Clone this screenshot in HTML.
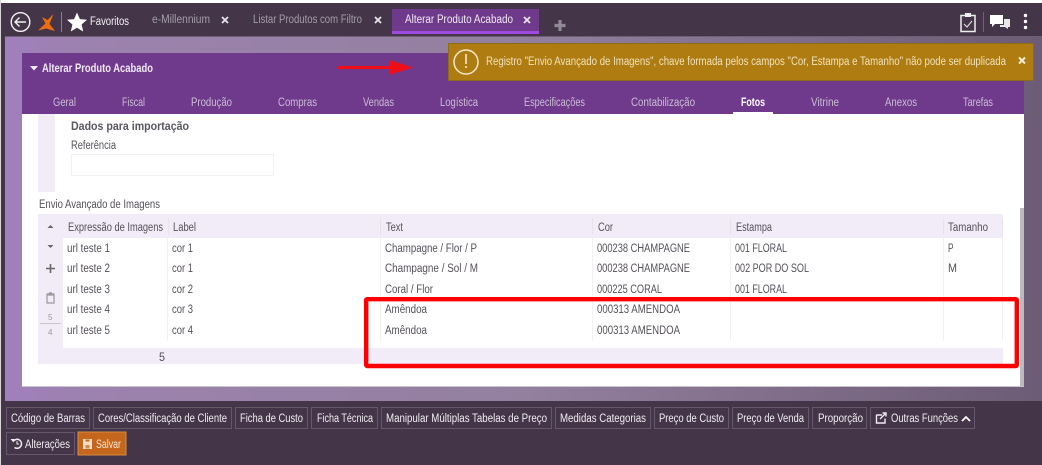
<!DOCTYPE html>
<html lang="pt"><head><meta charset="utf-8"><title>Alterar Produto Acabado</title>
<style>
html,body{margin:0;padding:0;width:1042px;height:465px;overflow:hidden;background:#443648}
svg{display:block;position:absolute;left:0;top:0}
text{font-family:"Liberation Sans",sans-serif;font-size:11.5px}
.r text{fill:#55505a}
.b text{fill:#f0ecf2}
.t text{fill:#c9bdd3}
</style></head><body>
<svg width="1042" height="465" viewBox="0 0 1042 465" xmlns="http://www.w3.org/2000/svg">
<defs>
<linearGradient id="bg" x1="0" y1="0" x2="1" y2="0"><stop offset="0" stop-color="#a17fbc"/><stop offset=".08" stop-color="#9c82ae"/><stop offset=".5" stop-color="#93809f"/><stop offset="1" stop-color="#6d5c75"/></linearGradient>
<filter id="s" x="-2%" y="-2%" width="104%" height="104%"><feGaussianBlur stdDeviation="0.35"/></filter>
</defs>
<rect width="1042" height="465" fill="#443648"/>
<rect width="1042" height="3" fill="#fff"/>
<rect x="0" width="1" height="465" fill="#d8d4da"/>
<rect x="5" y="36" width="1037" height="365" fill="url(#bg)"/>
<rect x="5" y="36" width="1037" height="1" fill="#6e5f74"/>

<!-- panel -->
<rect x="22" y="53" width="1002" height="61" fill="#6f3a8c"/>
<rect x="22" y="114" width="1002" height="272" fill="#fff"/>
<rect x="22" y="386" width="1002" height="1" fill="#c9c5cc"/>
<rect x="1020" y="208" width="4" height="178" fill="#bdbabf"/>

<!-- active tab -->
<rect x="392" y="9" width="147" height="25" fill="#6f3a8c"/>
<rect x="392" y="31" width="147" height="3" fill="#a04ae0"/>

<!-- content blocks -->
<rect x="38" y="114" width="17" height="78" fill="#f1ecf7"/>
<rect x="71.5" y="154.5" width="202" height="21" fill="#fff" stroke="#f2f2f2"/>
<rect x="38" y="214" width="965" height="24" fill="#f1ecf7"/>
<rect x="38" y="214" width="25" height="150" fill="#f1ecf7"/>
<rect x="38" y="348" width="965" height="16" fill="#f1ecf7"/>
<g fill="#e6e3e9">
<rect x="168" y="218" width="1" height="17"/><rect x="380" y="218" width="1" height="17"/><rect x="592" y="218" width="1" height="17"/><rect x="730" y="218" width="1" height="17"/><rect x="943" y="218" width="1" height="17"/><rect x="1002" y="218" width="1" height="17"/>
</g>
<g fill="#f1f0f2">
<rect x="167" y="238" width="1" height="103"/><rect x="380" y="238" width="1" height="103"/><rect x="592" y="238" width="1" height="103"/><rect x="730" y="238" width="1" height="103"/><rect x="943" y="238" width="1" height="103"/><rect x="1002" y="238" width="1" height="103"/>
</g>

<!-- alert -->
<rect x="448.5" y="43.5" width="585" height="37" fill="#ae7c10" stroke="#8f6a18"/>

<g filter="url(#s)">
<!-- top bar icons -->
<circle cx="20.5" cy="22" r="9.3" fill="none" stroke="#f2f0f3" stroke-width="1.4"/>
<path d="M26 22H15M19.5 17.5L15 22l4.500 4.500" fill="none" stroke="#f2f0f3" stroke-width="1.4"/>
<path d="M53.500 14L47.500 20 42 17 45.500 23.500 38 30.500 46 28.500 55 31 49.500 24z" fill="#f06c10"/>
<rect x="61" y="12" width="1" height="20" fill="#8a7f8e"/>
<path d="M77 12.500l2.900 6.600 7.100.7-5.400 4.700 1.600 7-6.200-3.700-6.200 3.700 1.600-7-5.400-4.700 7.100-.7z" fill="#fff"/>
<g stroke="#e8e4ea" stroke-width="1.800" fill="none">
<path d="M222 17l6 6M228 17l-6 6"/><path d="M375 17l6 6M381 17l-6 6"/><path d="M524 17l6 6M530 17l-6 6"/>
</g>
<path d="M560 20v11M554.500 25.500h11" stroke="#8f8995" stroke-width="3.200"/>
<!-- right icons -->
<rect x="961" y="15.500" width="14" height="16" fill="none" stroke="#eee" stroke-width="1.500"/>
<rect x="965" y="13" width="6" height="4" fill="#eee"/>
<path d="M964 24l3 3 5-6" fill="none" stroke="#ddd" stroke-width="1.100"/>
<rect x="983" y="12" width="1" height="20" fill="#6f6473"/>
<path d="M990 15h13v9h-8l-3 3v-3h-2z" fill="#fff"/>
<path d="M1004 19h6v8h-2v2l-3-2h-5v-2h4z" fill="#e8e8e8"/>
<g fill="#fff"><circle cx="1025.500" cy="15.500" r="1.700"/><circle cx="1025.500" cy="21.500" r="1.700"/><circle cx="1025.500" cy="27.500" r="1.700"/></g>

<!-- top bar text -->
<text x="90" y="25" fill="#f4f2f5" textLength="39" lengthAdjust="spacingAndGlyphs">Favoritos</text>
<text x="152" y="23" fill="#a39ca8" textLength="58" lengthAdjust="spacingAndGlyphs">e-Millennium</text>
<text x="253" y="23" fill="#a39ca8" textLength="109" lengthAdjust="spacingAndGlyphs">Listar Produtos com Filtro</text>
<text x="405" y="23" fill="#efe9f3" textLength="108" lengthAdjust="spacingAndGlyphs">Alterar Produto Acabado</text>

<!-- panel header -->
<path d="M30 66h8l-4 4.500z" fill="#f4f0f6"/>
<text x="42" y="72" fill="#efe8f3" font-weight="bold" textLength="111" lengthAdjust="spacingAndGlyphs">Alterar Produto Acabado</text>
<g class="t">
<text x="53" y="106" textLength="23" lengthAdjust="spacingAndGlyphs">Geral</text>
<text x="122" y="106" textLength="23" lengthAdjust="spacingAndGlyphs">Fiscal</text>
<text x="191" y="106" textLength="41" lengthAdjust="spacingAndGlyphs">Produção</text>
<text x="278" y="106" textLength="39" lengthAdjust="spacingAndGlyphs">Compras</text>
<text x="363" y="106" textLength="31" lengthAdjust="spacingAndGlyphs">Vendas</text>
<text x="440" y="106" textLength="38" lengthAdjust="spacingAndGlyphs">Logística</text>
<text x="524" y="106" textLength="61" lengthAdjust="spacingAndGlyphs">Especificações</text>
<text x="631" y="106" textLength="64" lengthAdjust="spacingAndGlyphs">Contabilização</text>
<text x="811" y="106" textLength="28" lengthAdjust="spacingAndGlyphs">Vitrine</text>
<text x="885" y="106" textLength="32" lengthAdjust="spacingAndGlyphs">Anexos</text>
<text x="963" y="106" textLength="30" lengthAdjust="spacingAndGlyphs">Tarefas</text>
</g>
<text x="741" y="106" fill="#fff" font-weight="bold" textLength="24" lengthAdjust="spacingAndGlyphs">Fotos</text>
<rect x="733" y="112" width="40" height="2" fill="#fff"/>

<!-- form -->
<text x="71" y="130" fill="#5a5560" font-weight="bold" textLength="118" lengthAdjust="spacingAndGlyphs">Dados para importação</text>
<g class="r">
<text x="71" y="149" textLength="45" lengthAdjust="spacingAndGlyphs">Referência</text>
<text x="39" y="208" textLength="121" lengthAdjust="spacingAndGlyphs">Envio Avançado de Imagens</text>
<text x="68" y="231" textLength="95" lengthAdjust="spacingAndGlyphs">Expressão de Imagens</text>
<text x="173" y="231" textLength="23" lengthAdjust="spacingAndGlyphs">Label</text>
<text x="386" y="231" textLength="17" lengthAdjust="spacingAndGlyphs">Text</text>
<text x="598" y="231" textLength="15" lengthAdjust="spacingAndGlyphs">Cor</text>
<text x="736" y="231" textLength="36" lengthAdjust="spacingAndGlyphs">Estampa</text>
<text x="948" y="231" textLength="40" lengthAdjust="spacingAndGlyphs">Tamanho</text>

<text x="67" y="252" textLength="43" lengthAdjust="spacingAndGlyphs">url teste 1</text>
<text x="172" y="252" textLength="21" lengthAdjust="spacingAndGlyphs">cor 1</text>
<text x="385" y="252" textLength="92" lengthAdjust="spacingAndGlyphs">Champagne / Flor / P</text>
<text x="597" y="252" textLength="93" lengthAdjust="spacingAndGlyphs">000238 CHAMPAGNE</text>
<text x="735" y="252" textLength="52" lengthAdjust="spacingAndGlyphs">001 FLORAL</text>
<text x="948" y="252" textLength="5.500" lengthAdjust="spacingAndGlyphs">P</text>

<text x="67" y="272" textLength="43" lengthAdjust="spacingAndGlyphs">url teste 2</text>
<text x="172" y="272" textLength="21" lengthAdjust="spacingAndGlyphs">cor 1</text>
<text x="385" y="272" textLength="93" lengthAdjust="spacingAndGlyphs">Champagne / Sol / M</text>
<text x="597" y="272" textLength="93" lengthAdjust="spacingAndGlyphs">000238 CHAMPAGNE</text>
<text x="735" y="272" textLength="74" lengthAdjust="spacingAndGlyphs">002 POR DO SOL</text>
<text x="948" y="272" textLength="9" lengthAdjust="spacingAndGlyphs">M</text>

<text x="67" y="293" textLength="43" lengthAdjust="spacingAndGlyphs">url teste 3</text>
<text x="172" y="293" textLength="21" lengthAdjust="spacingAndGlyphs">cor 2</text>
<text x="385" y="293" textLength="48" lengthAdjust="spacingAndGlyphs">Coral / Flor</text>
<text x="597" y="293" textLength="65" lengthAdjust="spacingAndGlyphs">000225 CORAL</text>
<text x="735" y="293" textLength="52" lengthAdjust="spacingAndGlyphs">001 FLORAL</text>

<text x="67" y="313" textLength="43" lengthAdjust="spacingAndGlyphs">url teste 4</text>
<text x="172" y="313" textLength="21" lengthAdjust="spacingAndGlyphs">cor 3</text>
<text x="385" y="313" textLength="42" lengthAdjust="spacingAndGlyphs">Amêndoa</text>
<text x="597" y="313" textLength="83" lengthAdjust="spacingAndGlyphs">000313 AMENDOA</text>

<text x="67" y="334" textLength="43" lengthAdjust="spacingAndGlyphs">url teste 5</text>
<text x="172" y="334" textLength="21" lengthAdjust="spacingAndGlyphs">cor 4</text>
<text x="385" y="334" textLength="42" lengthAdjust="spacingAndGlyphs">Amêndoa</text>
<text x="597" y="334" textLength="83" lengthAdjust="spacingAndGlyphs">000313 AMENDOA</text>

<text x="159" y="361" textLength="6" lengthAdjust="spacingAndGlyphs">5</text>
</g>

<!-- left table tools -->
<path d="M47.500 228l3-3 3 3z" fill="#666"/>
<path d="M47.500 245h6l-3 3z" fill="#666"/>
<path d="M50.500 264v9M46 268.500h9" stroke="#666" stroke-width="1.600"/>
<path d="M47 295h7v8h-7zM46.500 294h8M49 292.800h3" fill="none" stroke="#999" stroke-width="1.200"/>
<text x="48" y="320" style="font-size:8px" fill="#9a98a0">5</text>
<rect x="40" y="323" width="21" height="1" fill="#c8c6cc"/>
<text x="48" y="335" style="font-size:8px" fill="#9a98a0">4</text>

<!-- red markers -->
<rect x="366.200" y="299.200" width="650.600" height="66.800" rx="1" fill="none" stroke="#fe0000" stroke-width="4.400"/>
<path d="M337 66h52v-6l24 7.500-24 7.500v-6h-52z" fill="#f00a14"/>

<!-- alert content -->
<circle cx="466" cy="62" r="12" fill="none" stroke="#f3e8cf" stroke-width="1.500"/>
<rect x="465.200" y="54" width="1.600" height="10" fill="#f3e8cf"/>
<rect x="465.200" y="66" width="1.600" height="2" fill="#f3e8cf"/>
<text x="486" y="65" fill="#f0e2bd" textLength="520" lengthAdjust="spacingAndGlyphs">Registro "Envio Avançado de Imagens", chave formada pelos campos "Cor, Estampa e Tamanho" não pode ser duplicada</text>
<path d="M1019 57.500l6 6M1025 57.500l-6 6" stroke="#f6ecd4" stroke-width="2"/>

<!-- bottom buttons -->
<g fill="none" stroke="#65586b">
<rect x="6.500" y="407.500" width="83" height="21"/>
<rect x="93.500" y="407.500" width="138" height="21"/>
<rect x="235.500" y="407.500" width="72" height="21"/>
<rect x="311.500" y="407.500" width="66" height="21"/>
<rect x="381.500" y="407.500" width="170" height="21"/>
<rect x="555.500" y="407.500" width="95" height="21"/>
<rect x="654.500" y="407.500" width="74" height="21"/>
<rect x="732.500" y="407.500" width="76" height="21"/>
<rect x="812.500" y="407.500" width="54" height="21"/>
<rect x="870.500" y="407.500" width="104" height="21"/>
<rect x="6.500" y="432.500" width="68" height="22"/>
</g>
<rect x="78" y="432" width="48" height="23" fill="#c4661c" stroke="#d98a45"/>
<g class="b">
<text x="11" y="422" textLength="74" lengthAdjust="spacingAndGlyphs">Código de Barras</text>
<text x="98" y="422" textLength="129" lengthAdjust="spacingAndGlyphs">Cores/Classificação de Cliente</text>
<text x="240" y="422" textLength="63" lengthAdjust="spacingAndGlyphs">Ficha de Custo</text>
<text x="317" y="422" textLength="56" lengthAdjust="spacingAndGlyphs">Ficha Técnica</text>
<text x="386" y="422" textLength="161" lengthAdjust="spacingAndGlyphs">Manipular Múltiplas Tabelas de Preço</text>
<text x="560" y="422" textLength="86" lengthAdjust="spacingAndGlyphs">Medidas Categorias</text>
<text x="659" y="422" textLength="65" lengthAdjust="spacingAndGlyphs">Preço de Custo</text>
<text x="737" y="422" textLength="67" lengthAdjust="spacingAndGlyphs">Preço de Venda</text>
<text x="818" y="422" textLength="45" lengthAdjust="spacingAndGlyphs">Proporção</text>
<text x="891" y="422" textLength="67" lengthAdjust="spacingAndGlyphs">Outras Funções</text>
<text x="25" y="448" textLength="45" lengthAdjust="spacingAndGlyphs">Alterações</text>
</g>
<text x="96" y="448" fill="#f8e4d0" textLength="25" lengthAdjust="spacingAndGlyphs">Salvar</text>
<!-- bottom icons -->
<path d="M877 415h5M876.500 414.500v8.500h8.500v-4.500" fill="none" stroke="#f0ecf2" stroke-width="1.400"/>
<path d="M880 419l5-5M882.500 413h3.500v3.500" fill="none" stroke="#f0ecf2" stroke-width="1.400"/>
<path d="M962 421l4-4 4 4" fill="none" stroke="#fff" stroke-width="1.800"/>
<path d="M13.500 441a4.500 4.500 0 1 1 1 6.500" fill="none" stroke="#f0ecf2" stroke-width="1.500"/>
<path d="M10.500 439h4l-1 3.500z" fill="#f0ecf2"/>
<path d="M17 441v3h2" fill="none" stroke="#f0ecf2" stroke-width="1"/>
<rect x="83" y="439" width="9" height="10" fill="#f4dcc6"/>
<rect x="85.500" y="439.500" width="4" height="2" fill="#c4661c"/>
<rect x="85.500" y="445" width="4" height="3.500" fill="#c98a5c"/>
</g>
</svg>
</body></html>
